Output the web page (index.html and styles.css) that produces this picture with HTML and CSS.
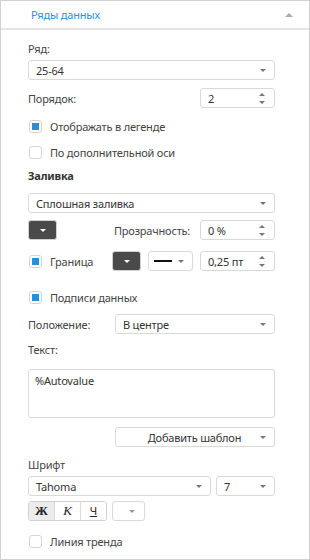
FILE: index.html
```html
<!DOCTYPE html>
<html lang="ru">
<head>
  <meta charset="UTF-8">
  <meta name="viewport" content="width=device-width, initial-scale=1.0">
  <title>Ряды данных</title>
  <link rel="stylesheet" href="styles.css">
</head>
<body>

  <div class="panel">
    <div class="panel-head">
      <span class="panel-title">Ряды данных</span>
      <span class="collapse"></span>
    </div>

    <div class="panel-body">
      <p class="label first">Ряд:</p>
      <div class="select full s-series"><span>25-64</span><i class="caret"></i></div>

      <div class="row r-order">
        <span>Порядок:</span>
        <div class="spin"><span>2</span><i class="arrows"></i></div>
      </div>

      <label class="check c-legend"><span class="box on"></span>Отображать в легенде</label>
      <label class="check c-axis"><span class="box"></span>По дополнительной оси</label>

      <p class="label bold l-fill">Заливка</p>
      <div class="select full s-fill"><span>Сплошная заливка</span><i class="caret"></i></div>

      <div class="row r-alpha">
        <div class="swatch"><i class="caret light"></i></div>
        <span class="push">Прозрачность:</span>
        <div class="spin"><span>0 %</span><i class="arrows"></i></div>
      </div>

      <div class="row r-border">
        <label class="check inline"><span class="box on"></span>Граница</label>
        <div class="swatch"><i class="caret light"></i></div>
        <div class="line-pick"><span class="stroke"></span><i class="caret"></i></div>
        <div class="spin"><span>0,25 пт</span><i class="arrows"></i></div>
      </div>

      <label class="check c-labels"><span class="box on"></span>Подписи данных</label>

      <div class="row r-pos">
        <span>Положение:</span>
        <div class="select wide"><span>В центре</span><i class="caret"></i></div>
      </div>

      <p class="label l-text">Текст:</p>
      <div class="textbox">%Autovalue</div>

      <div class="row r-tpl">
        <div class="select wide center"><span>Добавить шаблон</span><i class="caret"></i></div>
      </div>

      <p class="label l-font">Шрифт</p>
      <div class="row r-font">
        <div class="select font-name"><span>Tahoma</span><i class="caret"></i></div>
        <div class="select font-size"><span>7</span><i class="caret"></i></div>
      </div>

      <div class="row r-style">
        <div class="btn-group">
          <button class="btn pressed b">Ж</button>
          <button class="btn i">К</button>
          <button class="btn u">Ч</button>
        </div>
        <div class="color-pick"><i class="caret"></i></div>
      </div>

      <label class="check c-trend"><span class="box"></span>Линия тренда</label>
    </div>
  </div>

</body>
</html>
```

FILE: styles.css
```css
* {
  margin: 0;
  padding: 0;
  box-sizing: border-box;
}
body {
  margin: 0;
  background: #fff;
  font-family: "Noto Sans", "Open Sans", sans-serif;
  font-size: 11px;
  letter-spacing: -0.2px;
  color: #444;
}

.panel {
  width: 310px;
  height: 560px;
  border: 1px solid #d0d0d0;
  background: #fff;
}
.panel-head {
  display: flex;
  align-items: center;
  justify-content: space-between;
  height: 29px;
  padding: 0 16px 0 30px;
  border-bottom: 2px solid #e4e4e4;
}
.panel-title {
  color: #2e8fd8;
  font-size: 11px;
}
.collapse {
  width: 0;
  height: 0;
  border-left: 4px solid transparent;
  border-right: 4px solid transparent;
  border-bottom: 4px solid #aaa;
}

.panel-body {
  display: flex;
  flex-direction: column;
  padding: 0 34px 0 27px;
}

.label {
  height: 20px;
  line-height: 20px;
}
.bold {
  font-weight: bold;
  color: #333;
}

.row {
  display: flex;
  align-items: center;
  justify-content: space-between;
  height: 20px;
}

/* selects, spinners */
.select, .spin {
  display: flex;
  align-items: center;
  justify-content: space-between;
  height: 20px;
  border: 1px solid #d9d9d9;
  border-radius: 3px;
  background: #fff;
  padding: 0 8px 0 7px;
  color: #333;
}
.full { width: 100%; }
.wide { width: 160px; margin-left: auto; }
.center { justify-content: center; position: relative; }
.center .caret { position: absolute; right: 8px; top: 8px; }
.spin { width: 75px; }

.caret {
  width: 0;
  height: 0;
  border-left: 3.5px solid transparent;
  border-right: 3.5px solid transparent;
  border-top: 3.5px solid #777;
}
.caret.light { border-top-color: #fff; }

.arrows {
  position: relative;
  width: 7px;
  height: 11px;
}
.arrows::before, .arrows::after {
  content: "";
  position: absolute;
  left: 0;
  border-left: 3.5px solid transparent;
  border-right: 3.5px solid transparent;
}
.arrows::before { top: 0; border-bottom: 3.5px solid #777; }
.arrows::after { bottom: 0; border-top: 3.5px solid #777; }

/* checkboxes */
.check {
  display: flex;
  align-items: center;
  height: 20px;
  color: #444;
}
.box {
  width: 13px;
  height: 13px;
  border: 1px solid #d4d4d4;
  border-radius: 3px;
  background: #fff;
  margin: 0 8px 0 1px;
  display: flex;
  align-items: center;
  justify-content: center;
}
.box.on::after {
  content: "";
  width: 7px;
  height: 7px;
  background: #2a8fd6;
}

.swatch {
  display: flex;
  align-items: center;
  justify-content: center;
  width: 29px;
  height: 20px;
  border: 1px solid #d0d0d0;
  border-radius: 3px;
  background: #4a4a4a;
}
.push { margin-left: auto; margin-right: 10px; color: #444; }

.line-pick {
  display: flex;
  align-items: center;
  justify-content: space-between;
  width: 45px;
  height: 20px;
  border: 1px solid #d9d9d9;
  border-radius: 3px;
  padding: 0 8px 0 5px;
}
.stroke {
  width: 18px;
  height: 2px;
  background: #111;
}

.inline { margin-right: auto; }
.r-border .swatch { margin-right: 7px; }
.r-border .line-pick { margin-right: 7px; }

.textbox {
  height: 49px;
  border: 1px solid #d9d9d9;
  border-radius: 3px;
  padding: 3px 6px;
  color: #333;
}

.font-name { width: 183px; }
.font-size { width: 59px; }

.btn-group {
  display: flex;
  height: 20px;
  border: 1px solid #d0d0d0;
  border-radius: 3px;
  overflow: hidden;
}
.btn {
  width: 26px;
  height: 18px;
  border: none;
  border-left: 1px solid #d9d9d9;
  background: #fff;
  color: #222;
  font-size: 12px;
  line-height: 18px;
}
.btn:first-child { border-left: none; width: 25px; }
.pressed { background: #ececec; }
.b { font-family: "Liberation Serif", serif; font-weight: bold; font-size: 13px; }
.i { font-family: "Liberation Serif", serif; font-style: italic; font-size: 13px; }
.u { font-family: "Noto Sans", sans-serif; text-decoration: underline; font-size: 11px; }
.color-pick {
  display: flex;
  align-items: center;
  justify-content: center;
  width: 33px;
  height: 20px;
  margin: 0 auto 0 5px;
  border: 1px solid #d9d9d9;
  border-radius: 3px;
}
.color-pick .caret { margin-left: 6px; border-top-color: #999; }

/* vertical rhythm */
.first { margin-top: 9px; }
.s-series { margin-top: 1px; }
.r-order { margin-top: 8px; justify-content: space-between; }
.c-legend { margin-top: 8px; }
.c-axis { margin-top: 6px; }
.l-fill { margin-top: 4px; }
.s-fill { margin-top: 7px; }
.r-alpha { margin-top: 7px; }
.r-border { margin-top: 11px; }
.c-labels { margin-top: 16px; }
.r-pos { margin-top: 7px; }
.l-text { margin-top: 6px; }
.textbox { margin-top: 9px; }
.r-tpl { margin-top: 9px; }
.l-font { margin-top: 8px; }
.r-font { margin-top: 1px; }
.r-style { margin-top: 5px; justify-content: flex-start; }
.c-trend { margin-top: 10px; }
```
